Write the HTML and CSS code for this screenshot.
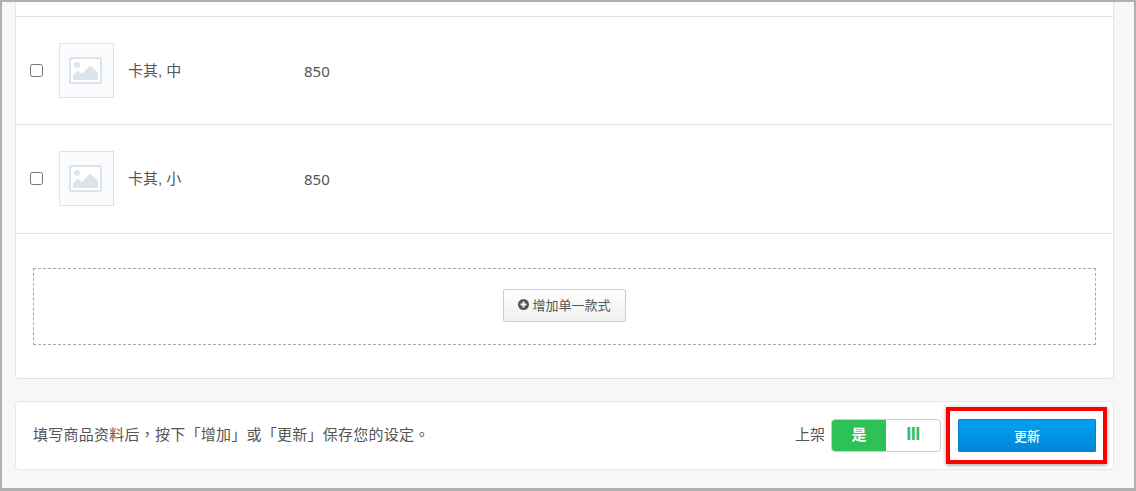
FILE: index.html
```html
<!DOCTYPE html>
<html lang="zh-TW">
<head>
    <meta charset="UTF-8">
    <title>商品款式</title>
    <link rel="stylesheet" href="styles.css">
</head>
<body>
    <div class="page">
        <!-- 款式列表 -->
        <div class="card">
            <div class="row-top"></div>

            <div class="row">
                <input class="check" type="checkbox">
                <div class="thumb">
                    <svg width="33" height="27" viewBox="0 0 33 27">
                        <rect x="1" y="1" width="31" height="25" rx="1.5" fill="#fff" stroke="#dce3ea" stroke-width="2"/>
                        <circle cx="8" cy="8" r="3" fill="#dce3ea"/>
                        <path d="M4 23 V18 L9 13.5 L13 17 L21 8.5 L29 15.5 V23 Z" fill="#dce3ea"/>
                    </svg>
                </div>
                <div class="name">卡其, 中</div>
                <div class="price">850</div>
            </div>

            <div class="row">
                <input class="check" type="checkbox">
                <div class="thumb">
                    <svg width="33" height="27" viewBox="0 0 33 27">
                        <rect x="1" y="1" width="31" height="25" rx="1.5" fill="#fff" stroke="#dce3ea" stroke-width="2"/>
                        <circle cx="8" cy="8" r="3" fill="#dce3ea"/>
                        <path d="M4 23 V18 L9 13.5 L13 17 L21 8.5 L29 15.5 V23 Z" fill="#dce3ea"/>
                    </svg>
                </div>
                <div class="name">卡其, 小</div>
                <div class="price">850</div>
            </div>

            <div class="add-area">
                <div class="add-box">
                    <button class="btn-add" type="button">
                        <svg width="11" height="11" viewBox="0 0 12 12">
                            <circle cx="6" cy="6" r="6" fill="#555"/>
                            <path d="M6 2.8 V9.2 M2.8 6 H9.2" stroke="#fff" stroke-width="2"/>
                        </svg>
                        增加单一款式
                    </button>
                </div>
            </div>
        </div>

        <!-- 底部操作栏 -->
        <div class="footer">
            <div class="hint">填写商品资料后，按下「增加」或「更新」保存您的设定。</div>
            <div class="actions">
                <span class="label">上架</span>
                <div class="toggle">
                    <span class="toggle-on">是</span>
                    <span class="toggle-off">III</span>
                </div>
                <button class="btn-update" type="button">更新</button>
            </div>
            <!-- 红色标注框 -->
            <div class="highlight"></div>
        </div>
    </div>
</body>
</html>
```

FILE: styles.css
```css
* {
    margin: 0;
    padding: 0;
    box-sizing: border-box;
    font-family: "Liberation Sans", "Noto Sans CJK TC", sans-serif;
}

body {
    background: #f7f7f7;
    overflow: hidden;
}

/* 页面外框 */
.page {
    height: 491px;
    border: 2px solid #b0b0b0;
    border-bottom-width: 3px;
    padding-left: 13px;
    padding-right: 20px;
}

.card {
    height: 377px;
    background: #fff;
    border: 1px solid #e4e4e4;
    border-top: none;
    border-radius: 0 0 4px 4px;
}

.row-top {
    height: 15px;
    border-bottom: 1px solid #e0e0e0;
}

.row {
    height: 108px;
    display: flex;
    align-items: center;
    padding-left: 14px;
    border-bottom: 1px solid #e0e0e0;
    color: #555;
    font-size: 15px;
}
.row + .row {
    height: 109px;
    padding-bottom: 1px;
}

.check {
    width: 13px;
    height: 13px;
    margin-right: 16px;
}

.thumb {
    width: 55px;
    height: 55px;
    display: flex;
    align-items: center;
    justify-content: center;
    padding-right: 2px;
    background: #f9fbfc;
    border: 1px solid #e0e3e6;
    margin-right: 14px;
}

.name {
    width: 176px;
    margin-top: -2px;
}

.price {
    font-family: "Noto Sans", sans-serif;
    margin-top: 1px;
}

/* 增加款式区域 */
.add-area {
    padding: 34px 17px;
}

.add-box {
    height: 77px;
    display: flex;
    align-items: center;
    justify-content: center;
    border: 1px dashed #aaa;
}

.btn-add {
    width: 123px;
    height: 33px;
    display: flex;
    align-items: center;
    justify-content: center;
    gap: 3px;
    margin-bottom: 2px;
    padding-bottom: 2px;
    border: 1px solid #ccc;
    border-radius: 2px;
    background: linear-gradient(#fff, #f0f0f0);
    color: #555;
    font-size: 13px;
}

/* 底部操作栏 */
.footer {
    position: relative;
    height: 69px;
    margin-top: 22px;
    display: flex;
    align-items: center;
    justify-content: space-between;
    padding: 0 17px;
    background: #fff;
    border: 1px solid #e8e8e8;
    border-radius: 5px;
}

.hint {
    color: #555;
    font-size: 15px;
    letter-spacing: 0.25px;
    margin-top: -5px;
}

.actions {
    display: flex;
    align-items: center;
}

.label {
    color: #555;
    font-size: 15px;
    margin-right: 6px;
    margin-top: -5px;
}

.toggle {
    width: 110px;
    height: 33px;
    display: flex;
    border: 1px solid #ccc;
    border-radius: 4px;
    overflow: hidden;
    margin-right: 17px;
}

.toggle-on {
    width: 54px;
    background: #2dc157;
    color: #fff;
    font-size: 15px;
    font-weight: 700;
    line-height: 29px;
    text-align: center;
}

.toggle-off {
    flex: 1;
    color: #2dc157;
    font-size: 18px;
    font-weight: 700;
    letter-spacing: -0.5px;
    line-height: 29px;
    text-align: center;
}

.btn-update {
    width: 138px;
    height: 33px;
    border: none;
    border-radius: 2px;
    background: linear-gradient(#00a2f5, #0086d6);
    box-shadow: inset 0 0 0 1px #0b7fc0;
    color: #fff;
    font-size: 13px;
    font-weight: 500;
}

.highlight {
    position: absolute;
    left: 930px;
    top: 5px;
    width: 161px;
    height: 57px;
    border: 4px solid #f00;
    box-shadow: 0 1px 4px rgba(0, 0, 0, 0.4);
}
```
